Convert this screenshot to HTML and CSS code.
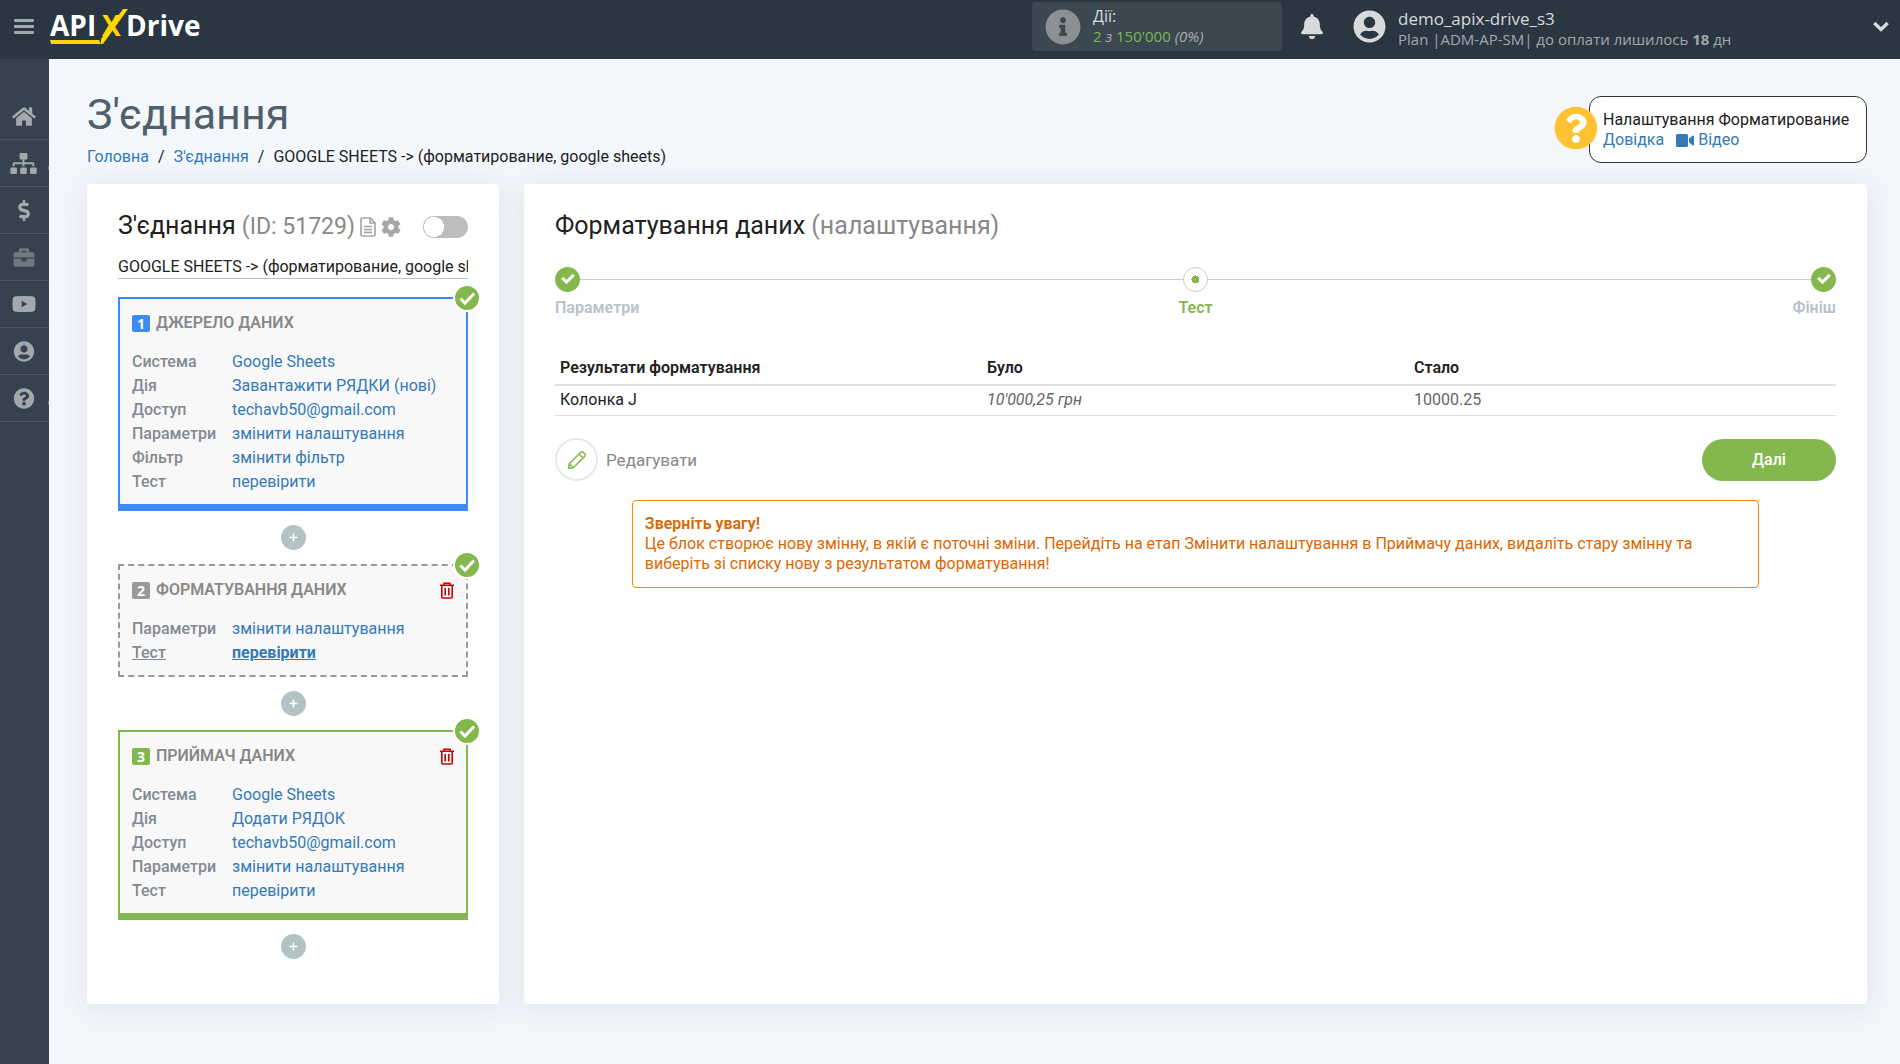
FILE: index.html
```html
<!DOCTYPE html>
<html lang="uk">
<head>
  <meta charset="UTF-8">
  <meta name="viewport" content="width=device-width, initial-scale=1.0">
  <title>З'єднання</title>
  <link rel="stylesheet" href="styles.css">
</head>
<body>

<!-- Icon set -->
<svg class="icon-set" aria-hidden="true">
  <symbol id="i-home" viewBox="0 0 576 512"><path d="M280.37 148.26L96 300.11V464a16 16 0 0 0 16 16l112.06-.29a16 16 0 0 0 15.92-16V368a16 16 0 0 1 16-16h64a16 16 0 0 1 16 16v95.64a16 16 0 0 0 16 16.05L464 480a16 16 0 0 0 16-16V300L295.67 148.26a12.19 12.19 0 0 0-15.3 0zM571.6 251.47L488 182.56V44.05a12 12 0 0 0-12-12h-56a12 12 0 0 0-12 12v72.61L318.47 43a48 48 0 0 0-61 0L4.34 251.47a12 12 0 0 0-1.6 16.9l25.5 31A12 12 0 0 0 45.15 301l235.22-193.74a12.19 12.19 0 0 1 15.3 0L530.9 301a12 12 0 0 0 16.9-1.6l25.5-31a12 12 0 0 0-1.7-16.93z"/></symbol>
  <symbol id="i-sitemap" viewBox="0 0 640 512"><path d="M128 352H32c-17.67 0-32 14.33-32 32v96c0 17.67 14.33 32 32 32h96c17.67 0 32-14.33 32-32v-96c0-17.67-14.33-32-32-32zm-24-80h192v48h48v-48h192v48h48v-57.59c0-21.17-17.23-38.41-38.41-38.41H344v-64h40c17.67 0 32-14.33 32-32V32c0-17.67-14.33-32-32-32H256c-17.67 0-32 14.33-32 32v96c0 17.67 14.33 32 32 32h40v64H94.41C73.23 224 56 241.23 56 262.41V320h48v-48zm264 80h-96c-17.67 0-32 14.33-32 32v96c0 17.67 14.33 32 32 32h96c17.67 0 32-14.33 32-32v-96c0-17.67-14.33-32-32-32zm240 0h-96c-17.67 0-32 14.33-32 32v96c0 17.67 14.33 32 32 32h96c17.67 0 32-14.33 32-32v-96c0-17.67-14.33-32-32-32z"/></symbol>
  <symbol id="i-dollar" viewBox="0 0 288 512"><path d="M209.2 233.4l-108-31.6C88.7 198.2 80 186.5 80 173.5c0-16.3 13.2-29.5 29.5-29.5h66.3c12.2 0 24.2 3.7 34.2 10.5 6.1 4.1 14.3 3.1 19.5-2l34.8-34c7.1-6.9 6.1-18.4-1.8-24.5C238 74.8 207.4 64.1 176 64V16c0-8.8-7.2-16-16-16h-32c-8.8 0-16 7.2-16 16v48h-2.5C45.8 64-5.4 118.7.5 183.6c4.2 46.1 39.4 83.6 83.8 96.6l102.5 30c12.5 3.7 21.2 15.3 21.2 28.3 0 16.3-13.2 29.5-29.5 29.5h-66.3C100 368 88 364.3 78 357.5c-6.1-4.1-14.3-3.1-19.5 2l-34.8 34c-7.1 6.9-6.1 18.4 1.8 24.5 24.5 19.2 55.1 29.9 86.5 30v48c0 8.8 7.2 16 16 16h32c8.8 0 16-7.2 16-16v-48.2c46.6-.9 90.3-28.6 105.7-72.7 21.5-61.6-14.6-124.8-72.5-141.7z"/></symbol>
  <symbol id="i-briefcase" viewBox="0 0 512 512"><path d="M320 336c0 8.84-7.16 16-16 16h-96c-8.84 0-16-7.16-16-16v-48H0v144c0 25.6 22.4 48 48 48h416c25.6 0 48-22.4 48-48V288H320v48zm144-208h-80V80c0-25.6-22.4-48-48-48H176c-25.6 0-48 22.4-48 48v48H48c-25.6 0-48 22.4-48 48v80h512v-80c0-25.6-22.4-48-48-48zm-144 0H192V96h128v32z"/></symbol>
  <symbol id="i-youtube" viewBox="0 0 23 16"><path fill-rule="evenodd" d="M3 .3Q11.500-.3 20 .3 22.600.5 22.800 3q.4 5 0 10-.2 2.500-2.800 2.700-8.500.6-17 0Q.4 15.500.2 13q-.4-5 0-10Q.4.500 3 .3zM9.200 4.800v6.400L14.800 8z"/></symbol>
  <symbol id="i-user" viewBox="0 0 496 512"><path d="M248 8C111 8 0 119 0 256s111 248 248 248 248-111 248-248S385 8 248 8zm0 96c48.6 0 88 39.4 88 88s-39.4 88-88 88-88-39.4-88-88 39.4-88 88-88zm0 344c-58.7 0-111.3-26.6-146.5-68.2 18.8-35.4 55.6-59.8 98.5-59.8 2.4 0 4.8.4 7.1 1.1 13 4.2 26.600 6.900 40.900 6.900 14.300 0 28-2.700 40.900-6.900 2.300-.7 4.700-1.100 7.100-1.100 42.900 0 79.700 24.400 98.500 59.800C359.300 421.400 306.700 448 248 448z"/></symbol>
  <symbol id="i-question" viewBox="0 0 512 512"><path d="M504 256c0 136.997-111.043 248-248 248S8 392.997 8 256C8 119.083 119.043 8 256 8s248 111.083 248 248zM262.655 90c-54.497 0-89.255 22.957-116.549 63.758-3.536 5.286-2.353 12.415 2.715 16.258l34.699 26.31c5.205 3.947 12.621 3.008 16.665-2.122 17.864-22.658 30.113-35.797 57.303-35.797 20.429 0 45.698 13.148 45.698 32.958 0 14.976-12.363 22.667-32.534 33.976C247.128 238.528 216 254.941 216 296v4c0 6.627 5.373 12 12 12h56c6.627 0 12-5.373 12-12v-1.333c0-28.462 83.186-29.647 83.186-106.667 0-58.002-60.165-102-116.531-102zM256 338c-25.365 0-46 20.635-46 46 0 25.364 20.635 46 46 46s46-20.636 46-46c0-25.365-20.635-46-46-46z"/></symbol>
  <symbol id="i-info" viewBox="0 0 512 512"><path d="M256 8C119.043 8 8 119.083 8 256c0 136.997 111.043 248 248 248s248-111.003 248-248C504 119.083 392.957 8 256 8zm0 110c23.196 0 42 18.804 42 42s-18.804 42-42 42-42-18.804-42-42 18.804-42 42-42zm56 254c0 6.627-5.373 12-12 12h-88c-6.627 0-12-5.373-12-12v-24c0-6.627 5.373-12 12-12h12v-64h-12c-6.627 0-12-5.373-12-12v-24c0-6.627 5.373-12 12-12h64c6.627 0 12 5.373 12 12v100h12c6.627 0 12 5.373 12 12v24z"/></symbol>
  <symbol id="i-bell" viewBox="0 0 448 512"><path d="M224 512c35.320 0 63.970-28.650 63.970-64H160.030c0 35.350 28.650 64 63.970 64zm215.390-149.710c-19.320-20.760-55.470-51.990-55.470-154.290 0-77.700-54.480-139.900-127.940-155.160V32c0-17.670-14.320-32-31.980-32s-31.980 14.330-31.980 32v20.840C118.560 68.100 64.080 130.300 64.080 208c0 102.300-36.150 133.530-55.470 154.290-6 6.450-8.660 14.160-8.610 21.710.11 16.400 12.980 32 32.100 32h383.800c19.120 0 32-15.600 32.100-32 .05-7.550-2.610-15.270-8.610-21.710z"/></symbol>
  <symbol id="i-cog" viewBox="0 0 512 512"><path d="M487.4 315.7l-42.6-24.6c4.300-23.200 4.300-47 0-70.200l42.600-24.600c4.900-2.800 7.100-8.600 5.500-14-11.100-35.600-30-67.800-54.700-94.600-3.800-4.100-10-5.100-14.800-2.300L380.800 110c-17.900-15.400-38.500-27.300-60.800-35.100V25.800c0-5.600-3.900-10.500-9.400-11.700-36.700-8.200-74.300-7.800-109.200 0-5.500 1.200-9.400 6.100-9.400 11.700V75c-22.200 7.900-42.800 19.800-60.800 35.100L88.700 85.500c-4.900-2.800-11-1.900-14.800 2.300-24.700 26.700-43.600 58.900-54.700 94.600-1.700 5.400.6 11.200 5.500 14L67.300 221c-4.300 23.200-4.300 47 0 70.200l-42.600 24.600c-4.900 2.800-7.100 8.600-5.500 14 11.100 35.600 30 67.800 54.700 94.600 3.800 4.100 10 5.100 14.800 2.300l42.600-24.600c17.900 15.400 38.500 27.300 60.800 35.100v49.200c0 5.600 3.900 10.500 9.400 11.700 36.700 8.200 74.300 7.800 109.200 0 5.500-1.200 9.400-6.100 9.400-11.700v-49.200c22.200-7.900 42.800-19.800 60.800-35.100l42.600 24.600c4.900 2.800 11 1.900 14.800-2.300 24.700-26.700 43.600-58.900 54.700-94.600 1.500-5.500-.7-11.300-5.600-14.100zM256 336c-44.100 0-80-35.900-80-80s35.900-80 80-80 80 35.900 80 80-35.900 80-80 80z"/></symbol>
  <symbol id="i-check" viewBox="0 0 24 24"><path fill="none" stroke="#fff" stroke-width="3" d="M5.500 12.500l4.500 4.500 9-9.500"/></symbol>
  <symbol id="i-step-check" viewBox="0 0 24 24"><path fill="none" stroke="#fff" stroke-width="3" d="M7 10.500l4 4 7-7"/></symbol>
  <symbol id="i-plus" viewBox="0 0 25 25"><path fill="none" stroke="#fff" stroke-width="1.500" d="M12.500 8.500v8M8.500 12.500h8"/></symbol>
  <symbol id="i-trash" viewBox="0 0 14 17"><path fill="none" stroke="currentColor" stroke-width="1.600" d="M0 3.300h14M4 3V1.200h6V3M1.800 3.500V15q0 1 1 1h8.400q1 0 1-1V3.500M5.200 6v7.500M8.800 6v7.500"/></symbol>
  <symbol id="i-file" viewBox="0 0 16 20"><path fill="none" stroke="currentColor" stroke-width="1.700" d="M1 2.500Q1 1 2.500 1h7.800L15 5.800v11.700q0 1.500-1.500 1.500h-11Q1 19 1 17.500zM10 1v5h5M4 9.500h8M4 12.500h8M4 15.300h8"/></symbol>
  <symbol id="i-video" viewBox="0 0 18 13"><path d="M1.500 0h9Q12 0 12 1.500v10q0 1.500-1.500 1.500h-9Q0 13 0 11.500v-10Q0 0 1.500 0zM13 4.500l3.600-2.700Q18 1.200 18 2.300v8.400q0 1.100-1.400.5L13 8.500z"/></symbol>
  <symbol id="i-pencil" viewBox="0 0 20 20"><path fill="none" stroke="currentColor" stroke-width="1.600" stroke-linejoin="round" d="M1.500 18.500l.8-4.800L13.800 2.200q1.200-1 2.400.1l1.500 1.500q1.100 1.200.1 2.400L6.300 17.700zM12 4l4 4M2.300 13.700l4 4"/></symbol>
  <symbol id="i-chevron" viewBox="0 0 16 11"><path fill="none" stroke="currentColor" stroke-width="3.400" d="M1.300 2L8 8.500 14.700 2"/></symbol>
</svg>

<header class="topbar">
  <button class="menu-btn" type="button" aria-label="Меню"><span></span><span></span><span></span></button>
  <a class="logo" href="#" aria-label="ApiX-Drive">
    <svg width="153" height="44" viewBox="0 -3 153 44">
      <text class="logo-text" x="0" y="28">API</text>
      <text class="logo-text logo-x" x="52" y="28">X</text>
      <text class="logo-text" x="76" y="28">Drive</text>
      <path fill="#ffd600" d="M73 1h5L53 36h-2v-5zM0 32h49l2 4H1z"/>
    </svg>
  </a>
  <div class="actions-box">
    <svg class="actions-icon"><use href="#i-info"/></svg>
    <div class="actions-text">
      <div class="actions-title">Дії:</div>
      <div class="actions-count"><b>2</b> <i>з</i> <b>150'000</b> <i>(0%)</i></div>
    </div>
  </div>
  <button class="bell-btn" type="button" aria-label="Сповіщення"><svg class="bell-icon"><use href="#i-bell"/></svg></button>
  <button class="user-menu" type="button">
    <svg class="user-icon"><use href="#i-user"/></svg>
    <span class="user-text">
      <span class="user-name">demo_apix-drive_s3</span>
      <span class="user-plan">Plan |ADM-AP-SM| до оплати лишилось <b>18</b> дн</span>
    </span>
    <svg class="chevron-icon"><use href="#i-chevron"/></svg>
  </button>
</header>

<div class="layout">
  <nav class="sidebar">
    <a href="#" aria-label="Головна"><svg><use href="#i-home"/></svg></a>
    <a href="#" aria-label="З'єднання" class="has-sub"><svg class="wide"><use href="#i-sitemap"/></svg></a>
    <a href="#" aria-label="Оплата"><svg><use href="#i-dollar"/></svg></a>
    <a href="#" aria-label="Проекти" class="muted"><svg><use href="#i-briefcase"/></svg></a>
    <a href="#" aria-label="Відео"><svg class="tube"><use href="#i-youtube"/></svg></a>
    <a href="#" aria-label="Профіль"><svg><use href="#i-user"/></svg></a>
    <a href="#" aria-label="Допомога" class="has-sub"><svg><use href="#i-question"/></svg></a>
  </nav>

  <main class="content">
    <div class="page-head">
      <div>
        <h1>З'єднання</h1>
        <nav class="breadcrumb">
          <a href="#">Головна</a><span class="sep">/</span><a href="#">З'єднання</a><span class="sep">/</span><span>GOOGLE SHEETS -&gt; (форматирование, google sheets)</span>
        </nav>
      </div>
      <div class="help-box">
        <svg class="help-icon"><use href="#i-question"/></svg>
        <div>Налаштування Форматирование</div>
        <div class="help-links">
          <a href="#">Довідка</a>
          <a href="#"><svg class="video-icon"><use href="#i-video"/></svg>Відео</a>
        </div>
      </div>
    </div>

    <div class="panels">
      <section class="card flow">
        <div class="flow-head">
          <h2>З'єднання <span>(ID: 51729)</span></h2>
          <button class="icon-btn" type="button" aria-label="Лог"><svg class="file-icon"><use href="#i-file"/></svg></button>
          <button class="icon-btn" type="button" aria-label="Налаштування"><svg class="cog-icon"><use href="#i-cog"/></svg></button>
          <input class="toggle" type="checkbox" aria-label="Увімкнути з'єднання">
        </div>
        <input class="flow-name" type="text" aria-label="Назва" value="GOOGLE SHEETS -&gt; (форматирование, google sheets)">

        <div class="block block-source">
          <svg class="block-ok"><use href="#i-check"/></svg>
          <h3><span class="num">1</span>ДЖЕРЕЛО ДАНИХ</h3>
          <dl>
            <dt>Система</dt><dd><a href="#">Google Sheets</a></dd>
            <dt>Дія</dt><dd><a href="#">Завантажити РЯДКИ (нові)</a></dd>
            <dt>Доступ</dt><dd><a href="#">techavb50@gmail.com</a></dd>
            <dt>Параметри</dt><dd><a href="#">змінити налаштування</a></dd>
            <dt>Фільтр</dt><dd><a href="#">змінити фільтр</a></dd>
            <dt>Тест</dt><dd><a href="#">перевірити</a></dd>
          </dl>
        </div>

        <button class="add-btn" type="button" aria-label="Додати"><svg><use href="#i-plus"/></svg></button>

        <div class="block block-format">
          <svg class="block-ok"><use href="#i-check"/></svg>
          <h3><span class="num">2</span>ФОРМАТУВАННЯ ДАНИХ
            <button class="trash-btn" type="button" aria-label="Видалити"><svg><use href="#i-trash"/></svg></button>
          </h3>
          <dl>
            <dt>Параметри</dt><dd><a href="#">змінити налаштування</a></dd>
            <dt class="current">Тест</dt><dd class="current"><a href="#">перевірити</a></dd>
          </dl>
        </div>

        <button class="add-btn" type="button" aria-label="Додати"><svg><use href="#i-plus"/></svg></button>

        <div class="block block-target">
          <svg class="block-ok"><use href="#i-check"/></svg>
          <h3><span class="num">3</span>ПРИЙМАЧ ДАНИХ
            <button class="trash-btn" type="button" aria-label="Видалити"><svg><use href="#i-trash"/></svg></button>
          </h3>
          <dl>
            <dt>Система</dt><dd><a href="#">Google Sheets</a></dd>
            <dt>Дія</dt><dd><a href="#">Додати РЯДОК</a></dd>
            <dt>Доступ</dt><dd><a href="#">techavb50@gmail.com</a></dd>
            <dt>Параметри</dt><dd><a href="#">змінити налаштування</a></dd>
            <dt>Тест</dt><dd><a href="#">перевірити</a></dd>
          </dl>
        </div>

        <button class="add-btn" type="button" aria-label="Додати"><svg><use href="#i-plus"/></svg></button>
      </section>

      <section class="card settings">
        <h2>Форматування даних <span>(налаштування)</span></h2>

        <ol class="steps">
          <li class="done"><span class="dot"><svg><use href="#i-step-check"/></svg></span>Параметри</li>
          <li class="now"><span class="dot"></span>Тест</li>
          <li class="done"><span class="dot"><svg><use href="#i-step-check"/></svg></span>Фініш</li>
        </ol>

        <table class="results">
          <thead>
            <tr><th>Результати форматування</th><th>Було</th><th>Стало</th></tr>
          </thead>
          <tbody>
            <tr><td>Колонка J</td><td class="before">10'000,25 грн</td><td class="after">10000.25</td></tr>
          </tbody>
        </table>

        <div class="form-actions">
          <button class="edit-btn" type="button"><span class="edit-circle"><svg><use href="#i-pencil"/></svg></span>Редагувати</button>
          <button class="next-btn" type="button">Далі</button>
        </div>

        <div class="notice">
          <b>Зверніть увагу!</b><br>
          Це блок створює нову змінну, в якій є поточні зміни. Перейдіть на етап Змінити налаштування в Приймачу даних, видаліть стару змінну та виберіть зі списку нову з результатом форматування!
        </div>
      </section>
    </div>
  </main>
</div>

</body>
</html>
```

FILE: styles.css
```css
* {
  box-sizing: border-box;
}
body {
  margin: 0;
  min-height: 100vh;
  display: flex;
  flex-direction: column;
  background: #f3f7fc;
  color: #212121;
  font: 16px/20px Roboto, "Liberation Sans", sans-serif;
}
a {
  color: #337ab7;
  text-decoration: none;
}
button {
  padding: 0;
  border: 0;
  background: none;
  font: inherit;
  color: inherit;
  cursor: pointer;
}
h1, h2, h3, dl, dd, ol {
  margin: 0;
  padding: 0;
}
svg {
  display: block;
  flex: none;
  fill: currentColor;
}
.icon-set {
  position: absolute;
  width: 0;
  height: 0;
}

/* Top bar */
.topbar {
  display: flex;
  align-items: center;
  height: 59px;
  padding: 0 11px 6px 14px;
  background: #2b3643;
  color: #d8dadc;
  font-family: "Open Sans", "Noto Sans", sans-serif;
}
.menu-btn {
  display: flex;
  flex-direction: column;
  gap: 3px;
}
.menu-btn span {
  width: 20px;
  height: 3px;
  border-radius: 1px;
  background: #a3a8ad;
}
.logo {
  margin: 0 auto 0 16px;
}
.logo svg {
  overflow: visible;
}
.logo-text {
  font: 700 28px "Open Sans", sans-serif;
  fill: #fff;
}
.logo-x {
  fill: #ffd600;
}
.actions-box {
  display: flex;
  align-items: center;
  gap: 12px;
  width: 250px;
  height: 49px;
  padding-left: 13px;
  border-radius: 4px;
  background: #3c4851;
}
.actions-icon {
  width: 36px;
  height: 36px;
  color: #8b9093;
}
.actions-text {
  padding-bottom: 2px;
}
.actions-title {
  font-size: 16px;
}
.actions-count {
  font-size: 15px;
  color: #a9adb0;
}
.actions-count b {
  font-weight: 400;
  color: #7cb851;
}
.bell-btn {
  margin: 0 30px 0 19px;
}
.bell-icon {
  width: 22px;
  height: 25px;
}
.user-menu {
  display: flex;
  align-items: center;
  width: 536px;
  text-align: left;
}
.user-icon {
  width: 33px;
  height: 33px;
}
.user-text {
  flex: 1;
  margin-left: 12px;
  padding-top: 4px;
}
.user-name, .user-plan {
  display: block;
}
.user-name {
  font-size: 17px;
}
.user-plan {
  font-size: 15px;
  color: #a3a8ad;
}
.chevron-icon {
  width: 16px;
  height: 11px;
}

/* Sidebar */
.layout {
  display: flex;
  flex: 1;
}
.sidebar {
  flex: none;
  width: 49px;
  padding-top: 34px;
  background: #36424f;
}
.sidebar a {
  display: flex;
  align-items: center;
  justify-content: center;
  height: 47px;
  padding-right: 2px;
  border-bottom: 1px solid #4a5662;
  color: #a3a8ad;
}
.sidebar svg {
  width: 24px;
  height: 21px;
}
.sidebar .wide {
  width: 27px;
}
.sidebar .tube {
  height: 16px;
}
.sidebar .muted {
  color: #6f7780;
}
.sidebar .has-sub {
  position: relative;
}
.sidebar .has-sub::after {
  content: "";
  position: absolute;
  right: 0;
  bottom: 16px;
  width: 1px;
  height: 4px;
  background: #6f7780;
}

/* Page header */
.content {
  flex: 1;
  min-width: 0;
  padding: 30px 33px 60px 38px;
}
.page-head {
  display: flex;
  align-items: flex-start;
  justify-content: space-between;
  margin-bottom: 17px;
}
h1 {
  margin-bottom: 8px;
  font-size: 43px;
  line-height: 50px;
  font-weight: 400;
  color: #4f5f6b;
}
.breadcrumb .sep {
  margin: 0 9px;
}
.help-box {
  position: relative;
  width: 278px;
  margin-top: 7px;
  padding: 13px 13px 12px;
  border: 1px solid #333;
  border-radius: 12px;
  background: #fff;
}
.help-icon {
  position: absolute;
  top: 9px;
  left: -36px;
  width: 44px;
  height: 44px;
  border-radius: 50%;
  color: #ffc233;
  background: radial-gradient(#fff 60%, transparent 60%);
}
.help-links {
  display: flex;
  gap: 12px;
}
.help-links a {
  display: flex;
  align-items: center;
  gap: 4px;
}
.video-icon {
  width: 18px;
  height: 13px;
}

/* Cards */
.panels {
  display: flex;
  gap: 25px;
}
.card {
  padding: 26px 31px 45px;
  border-radius: 4px;
  background: #fff;
  box-shadow: 0 4px 30px rgba(50, 50, 80, 0.1);
}
.flow {
  flex: none;
  width: 412px;
}
.settings {
  flex: 1;
  min-width: 0;
}
h2 {
  font-size: 25px;
  line-height: 32px;
  font-weight: 400;
}
h2 span {
  color: #888;
}

/* Flow column */
.flow-head {
  display: flex;
  align-items: center;
}
.flow-head h2 span {
  font-size: 23px;
}
.icon-btn {
  margin-left: 5px;
  color: #a6a6a6;
}
.file-icon {
  width: 16px;
  height: 20px;
}
.cog-icon {
  width: 20px;
  height: 20px;
}
.toggle {
  appearance: none;
  width: 45px;
  height: 22px;
  margin: 0 0 0 auto;
  border-radius: 11px;
  background: radial-gradient(circle at 11px 11px, #fff 10px, #bdbdbd 10px);
}
.flow-name {
  width: 100%;
  height: 24px;
  margin: 12px 0 18px;
  padding: 0;
  border: 0;
  border-bottom: 1px solid #bdbdbd;
  font: inherit;
  color: inherit;
}
.block {
  position: relative;
  padding: 12px 12px 10px;
  border: 2px solid;
  background: #f8f8f8;
}
.block-source {
  border-color: #3d8bf8;
  border-bottom-width: 7px;
}
.block-format {
  border: 2px dashed #999;
}
.block-target {
  border-color: #84b84f;
  border-bottom-width: 7px;
}
.block-ok {
  position: absolute;
  top: -15px;
  right: -15px;
  width: 28px;
  height: 28px;
  border: 2px solid #fff;
  border-radius: 50%;
  background: #84b84f;
}
.block h3 {
  display: flex;
  align-items: center;
  height: 24px;
  margin-bottom: 15px;
  font-size: 16px;
  font-weight: 600;
  color: #888;
}
.num {
  width: 18px;
  height: 17px;
  margin-right: 6px;
  border-radius: 2px;
  background: #999;
  color: #fff;
  font: 700 14px/17px "Open Sans", sans-serif;
  text-align: center;
}
.block-source .num {
  background: #3d8bf8;
}
.block-target .num {
  background: #84b84f;
}
.trash-btn {
  margin-left: auto;
  color: #c00;
}
.trash-btn svg {
  width: 14px;
  height: 17px;
}
.block dl {
  display: grid;
  grid-template-columns: 100px 1fr;
  line-height: 24px;
}
.block dt {
  font-weight: 500;
  color: #84898f;
}
dt.current, .current a {
  text-decoration: underline;
}
.current a {
  font-weight: 700;
}
.add-btn {
  display: block;
  margin: 14px auto;
  border-radius: 50%;
  background: #b3c3c3;
}
.add-btn:last-child {
  margin-bottom: 0;
}
.add-btn svg {
  width: 25px;
  height: 25px;
}

/* Steps */
.steps {
  display: flex;
  justify-content: space-between;
  margin-top: 25px;
  background: linear-gradient(#ccc, #ccc) 0 12px / 100% 1px no-repeat;
  list-style: none;
  font-weight: 600;
  color: #bac1c9;
}
.steps li {
  display: flex;
  flex: 1;
  flex-direction: column;
  gap: 6px;
}
.steps li:nth-child(2) {
  align-items: center;
}
.steps li:last-child {
  align-items: flex-end;
}
.steps .now {
  color: #84b84f;
}
.dot {
  width: 25px;
  height: 25px;
  border-radius: 50%;
  background: #84b84f;
}
.dot svg {
  width: 25px;
  height: 25px;
}
.now .dot {
  border: 1px solid #ccc;
  background: radial-gradient(circle, #84b84f 4px, #fff 4px);
}

/* Results */
.results {
  width: 100%;
  margin-top: 35px;
  border-collapse: collapse;
  table-layout: fixed;
}
.results th {
  padding: 5px 5px 6px;
  border-bottom: 2px solid #dee0e0;
  text-align: left;
  font-weight: 600;
}
.results td {
  padding: 4px 5px 5px;
  border-bottom: 1px solid #dee0e0;
}
.results .before {
  font-style: italic;
  color: #666;
}
.results .after {
  color: #666;
}
.form-actions {
  display: flex;
  align-items: center;
  justify-content: space-between;
  margin-top: 22px;
}
.edit-btn {
  display: flex;
  align-items: center;
  gap: 8px;
  font-size: 17px;
  color: #888;
}
.edit-circle {
  display: grid;
  place-items: center;
  width: 43px;
  height: 43px;
  border: 2px solid #e3ebe9;
  border-radius: 50%;
  color: #84b84f;
}
.edit-circle svg {
  width: 20px;
  height: 20px;
}
.next-btn {
  width: 134px;
  height: 42px;
  border-radius: 21px;
  background: #84b84f;
  color: #fff;
  font-weight: 500;
}
.notice {
  width: 88%;
  margin: 19px auto 0;
  padding: 13px 12px;
  border: 1px solid #ff8400;
  border-radius: 4px;
  color: #de6700;
}
.notice b {
  font-weight: 600;
}
```
